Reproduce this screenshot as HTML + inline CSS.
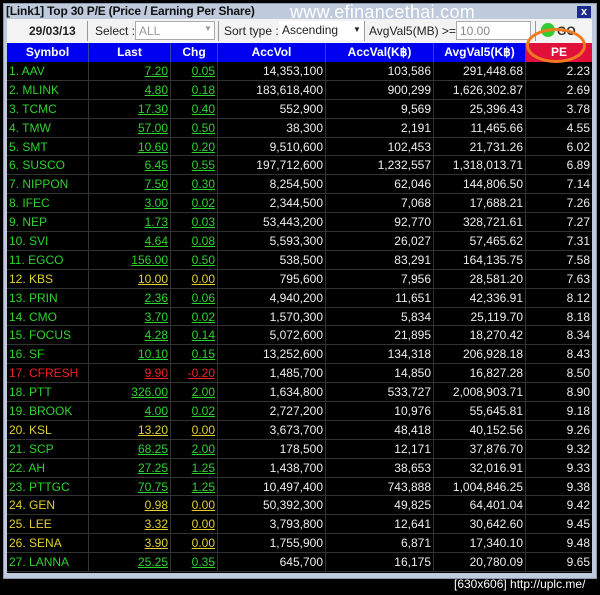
<!DOCTYPE html>
<html><head><meta charset="utf-8"><style>
*{margin:0;padding:0;box-sizing:border-box}
body{width:600px;height:595px;background:#000;position:relative;overflow:hidden;font-family:"Liberation Sans",sans-serif}
.frame{position:absolute;left:3px;top:3px;width:594px;height:576px;background:#bfcbdc;border:1px solid #8a9ab0}
.title{position:absolute;left:6px;top:4px;font-size:12px;font-weight:bold;color:#111;letter-spacing:-0.2px}
.wm{position:absolute;left:290px;top:2px;font-size:18px;color:#fff;letter-spacing:0.3px}
.close{position:absolute;left:577px;top:6px;width:14px;height:12px;background:#1a2a8a;color:#fff;font-size:11px;font-weight:bold;text-align:center;line-height:12px}
.tb{position:absolute;left:7px;top:19px;width:585px;height:24px;background:#f3f3f3;font-size:12px;color:#222}
.tb span{position:absolute;top:5px;white-space:nowrap}
.sep{position:absolute;top:2px;width:1px;height:20px;background:#999}
.box{position:absolute;top:2px;height:19px;background:#fff;border:1px solid #aaa}
.grid{position:absolute;left:7px;top:43px;width:585px;height:530px;background:#000}
.row{display:flex;height:18.9px;border-bottom:1px solid #333;font-size:12px;line-height:18px}
.row div{border-right:1px solid #333;padding:0 2px;white-space:nowrap}
.hd{height:19px;background:#0000f0;color:#fff;font-weight:bold;border-bottom:none}
.hd div{text-align:center;border-right:1px solid #3344aa}
.c1{width:82px}.c2{width:82px;text-align:right}.c3{width:47px;text-align:right}.c4{width:108px;text-align:right}.c5{width:108px;text-align:right}.c6{width:92px;text-align:right}.c7{width:66px;text-align:right;border-right:none!important}
.d .c4,.d .c5,.d .c6,.d .c7{color:#eee}
.d .c2,.d .c3{text-decoration:underline}
.g{color:#2ed22e}.y{color:#e0d030}.r{color:#ee2222}
.pe{background:#e0103a}
</style></head><body>
<div class="frame"></div>
<div class="title">[Link1] Top 30 P/E (Price / Earning Per Share)</div>
<div class="wm">www.efinancethai.com</div>
<div class="close">x</div>
<div class="tb">
<span style="left:22px;font-weight:bold">29/03/13</span>
<div class="sep" style="left:80px"></div>
<span style="left:88px">Select :</span>
<div class="box" style="left:128px;width:80px"><span style="left:3px;top:2px;color:#999">ALL</span><span style="left:68px;top:2px;color:#999;font-size:8px">▼</span></div>
<div class="sep" style="left:211px"></div>
<span style="left:217px">Sort type :</span>
<div class="box" style="left:272px;width:86px;border:none;background:#fff"><span style="left:3px;top:2px">Ascending</span><span style="left:74px;top:4px;font-size:8px">▼</span></div>
<div class="sep" style="left:357px"></div>
<span style="left:362px">AvgVal5(MB) &gt;=</span>
<div class="box" style="left:449px;width:75px"><span style="left:3px;top:2px;color:#888">10.00</span></div>
<div class="sep" style="left:528px"></div>
<div style="position:absolute;left:534px;top:4px;width:14px;height:14px;border-radius:50%;background:#3c3"></div>
<span style="left:550px;font-weight:bold;color:#333">GO</span>
</div>
<div class="grid">
<div class="row hd"><div class="c1">Symbol</div><div class="c2" style="text-align:center">Last</div><div class="c3" style="text-align:center">Chg</div><div class="c4" style="text-align:center">AccVol</div><div class="c5" style="text-align:center">AccVal(K฿)</div><div class="c6" style="text-align:center">AvgVal5(K฿)</div><div class="c7 pe" style="text-align:center">PE</div></div>
<div class="row d g"><div class="c1">1. AAV</div><div class="c2">7.20</div><div class="c3">0.05</div><div class="c4">14,353,100</div><div class="c5">103,586</div><div class="c6">291,448.68</div><div class="c7">2.23</div></div>
<div class="row d g"><div class="c1">2. MLINK</div><div class="c2">4.80</div><div class="c3">0.18</div><div class="c4">183,618,400</div><div class="c5">900,299</div><div class="c6">1,626,302.87</div><div class="c7">2.69</div></div>
<div class="row d g"><div class="c1">3. TCMC</div><div class="c2">17.30</div><div class="c3">0.40</div><div class="c4">552,900</div><div class="c5">9,569</div><div class="c6">25,396.43</div><div class="c7">3.78</div></div>
<div class="row d g"><div class="c1">4. TMW</div><div class="c2">57.00</div><div class="c3">0.50</div><div class="c4">38,300</div><div class="c5">2,191</div><div class="c6">11,465.66</div><div class="c7">4.55</div></div>
<div class="row d g"><div class="c1">5. SMT</div><div class="c2">10.60</div><div class="c3">0.20</div><div class="c4">9,510,600</div><div class="c5">102,453</div><div class="c6">21,731.26</div><div class="c7">6.02</div></div>
<div class="row d g"><div class="c1">6. SUSCO</div><div class="c2">6.45</div><div class="c3">0.55</div><div class="c4">197,712,600</div><div class="c5">1,232,557</div><div class="c6">1,318,013.71</div><div class="c7">6.89</div></div>
<div class="row d g"><div class="c1">7. NIPPON</div><div class="c2">7.50</div><div class="c3">0.30</div><div class="c4">8,254,500</div><div class="c5">62,046</div><div class="c6">144,806.50</div><div class="c7">7.14</div></div>
<div class="row d g"><div class="c1">8. IFEC</div><div class="c2">3.00</div><div class="c3">0.02</div><div class="c4">2,344,500</div><div class="c5">7,068</div><div class="c6">17,688.21</div><div class="c7">7.26</div></div>
<div class="row d g"><div class="c1">9. NEP</div><div class="c2">1.73</div><div class="c3">0.03</div><div class="c4">53,443,200</div><div class="c5">92,770</div><div class="c6">328,721.61</div><div class="c7">7.27</div></div>
<div class="row d g"><div class="c1">10. SVI</div><div class="c2">4.64</div><div class="c3">0.08</div><div class="c4">5,593,300</div><div class="c5">26,027</div><div class="c6">57,465.62</div><div class="c7">7.31</div></div>
<div class="row d g"><div class="c1">11. EGCO</div><div class="c2">156.00</div><div class="c3">0.50</div><div class="c4">538,500</div><div class="c5">83,291</div><div class="c6">164,135.75</div><div class="c7">7.58</div></div>
<div class="row d y"><div class="c1">12. KBS</div><div class="c2">10.00</div><div class="c3">0.00</div><div class="c4">795,600</div><div class="c5">7,956</div><div class="c6">28,581.20</div><div class="c7">7.63</div></div>
<div class="row d g"><div class="c1">13. PRIN</div><div class="c2">2.36</div><div class="c3">0.06</div><div class="c4">4,940,200</div><div class="c5">11,651</div><div class="c6">42,336.91</div><div class="c7">8.12</div></div>
<div class="row d g"><div class="c1">14. CMO</div><div class="c2">3.70</div><div class="c3">0.02</div><div class="c4">1,570,300</div><div class="c5">5,834</div><div class="c6">25,119.70</div><div class="c7">8.18</div></div>
<div class="row d g"><div class="c1">15. FOCUS</div><div class="c2">4.28</div><div class="c3">0.14</div><div class="c4">5,072,600</div><div class="c5">21,895</div><div class="c6">18,270.42</div><div class="c7">8.34</div></div>
<div class="row d g"><div class="c1">16. SF</div><div class="c2">10.10</div><div class="c3">0.15</div><div class="c4">13,252,600</div><div class="c5">134,318</div><div class="c6">206,928.18</div><div class="c7">8.43</div></div>
<div class="row d r"><div class="c1">17. CFRESH</div><div class="c2">9.90</div><div class="c3">-0.20</div><div class="c4">1,485,700</div><div class="c5">14,850</div><div class="c6">16,827.28</div><div class="c7">8.50</div></div>
<div class="row d g"><div class="c1">18. PTT</div><div class="c2">326.00</div><div class="c3">2.00</div><div class="c4">1,634,800</div><div class="c5">533,727</div><div class="c6">2,008,903.71</div><div class="c7">8.90</div></div>
<div class="row d g"><div class="c1">19. BROOK</div><div class="c2">4.00</div><div class="c3">0.02</div><div class="c4">2,727,200</div><div class="c5">10,976</div><div class="c6">55,645.81</div><div class="c7">9.18</div></div>
<div class="row d y"><div class="c1">20. KSL</div><div class="c2">13.20</div><div class="c3">0.00</div><div class="c4">3,673,700</div><div class="c5">48,418</div><div class="c6">40,152.56</div><div class="c7">9.26</div></div>
<div class="row d g"><div class="c1">21. SCP</div><div class="c2">68.25</div><div class="c3">2.00</div><div class="c4">178,500</div><div class="c5">12,171</div><div class="c6">37,876.70</div><div class="c7">9.32</div></div>
<div class="row d g"><div class="c1">22. AH</div><div class="c2">27.25</div><div class="c3">1.25</div><div class="c4">1,438,700</div><div class="c5">38,653</div><div class="c6">32,016.91</div><div class="c7">9.33</div></div>
<div class="row d g"><div class="c1">23. PTTGC</div><div class="c2">70.75</div><div class="c3">1.25</div><div class="c4">10,497,400</div><div class="c5">743,888</div><div class="c6">1,004,846.25</div><div class="c7">9.38</div></div>
<div class="row d y"><div class="c1">24. GEN</div><div class="c2">0.98</div><div class="c3">0.00</div><div class="c4">50,392,300</div><div class="c5">49,825</div><div class="c6">64,401.04</div><div class="c7">9.42</div></div>
<div class="row d y"><div class="c1">25. LEE</div><div class="c2">3.32</div><div class="c3">0.00</div><div class="c4">3,793,800</div><div class="c5">12,641</div><div class="c6">30,642.60</div><div class="c7">9.45</div></div>
<div class="row d y"><div class="c1">26. SENA</div><div class="c2">3.90</div><div class="c3">0.00</div><div class="c4">1,755,900</div><div class="c5">6,871</div><div class="c6">17,340.10</div><div class="c7">9.48</div></div>
<div class="row d g"><div class="c1">27. LANNA</div><div class="c2">25.25</div><div class="c3">0.35</div><div class="c4">645,700</div><div class="c5">16,175</div><div class="c6">20,780.09</div><div class="c7">9.65</div></div>
</div>
<div style="position:absolute;left:526px;top:28px;width:60px;height:35px;border:3px solid #f07a20;border-radius:50%"></div>
<div style="position:absolute;left:454px;top:577px;font-size:12px;color:#fff;white-space:nowrap;font-family:'Liberation Sans',sans-serif">[630x606] http://uplc.me/</div>
</body></html>
